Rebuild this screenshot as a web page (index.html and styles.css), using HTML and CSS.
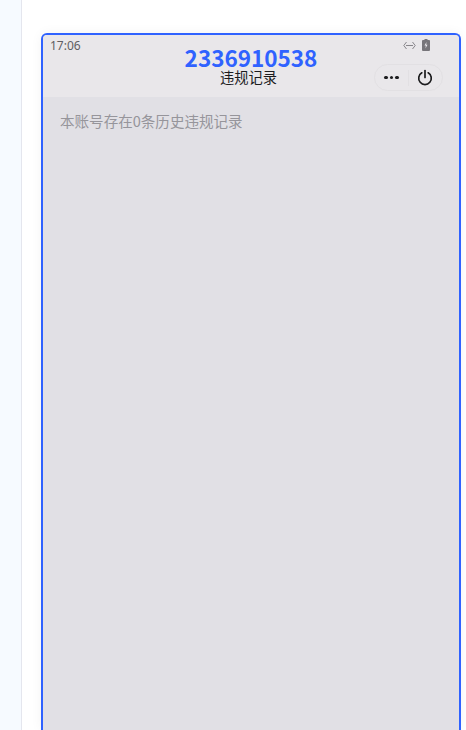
FILE: index.html
```html
<!DOCTYPE html>
<html lang="zh-CN">
<head>
    <meta charset="UTF-8">
    <meta name="viewport" content="width=device-width, initial-scale=1.0">
    <title>违规记录</title>
    <link rel="stylesheet" href="styles.css">
</head>
<body>

    <div class="sidebar"></div>

    <div class="main">
        <div class="phone">
            <div class="header">
                <div class="time">17:06</div>

                <div class="title-box">
                    <div class="account">2336910538</div>
                    <div class="title">违规记录</div>
                </div>

                <div class="header-right">
                    <div class="status-icons">
                        <svg class="icon-link" width="13" height="9" viewBox="0 0 13 9" fill="none" stroke="#88868b" stroke-width="1">
                            <path d="M3.5 1 L0.8 4.5 L3.5 8"/>
                            <path d="M9.5 1 L12.2 4.5 L9.5 8"/>
                            <path d="M3 4.5 H10"/>
                        </svg>
                        <svg class="icon-battery" width="8" height="12" viewBox="0 0 8 12">
                            <path fill="#77757a" d="M2.5 0 H5.5 V1 H7 Q8 1 8 2 V11 Q8 12 7 12 H1 Q0 12 0 11 V2 Q0 1 1 1 H2.5 Z"/>
                            <path fill="#e9e7ea" d="M4.5 3 L2.5 6.5 H3.8 L3.5 9.5 L5.5 5.8 H4.2 Z"/>
                        </svg>
                    </div>
                    <div class="capsule">
                        <div class="capsule-more">
                            <span class="dot"></span>
                            <span class="dot"></span>
                            <span class="dot"></span>
                        </div>
                        <div class="capsule-line"></div>
                        <svg class="icon-power" width="16" height="17" viewBox="0 0 16 17" fill="none" stroke="#1c1c1e" stroke-width="1.7" stroke-linecap="round">
                            <path d="M8 1.5 V8.5"/>
                            <path d="M4.8 3.8 A6.3 6.3 0 1 0 11.2 3.8"/>
                        </svg>
                    </div>
                </div>
            </div>

            <div class="content">本账号存在0条历史违规记录</div>
        </div>
    </div>

</body>
</html>
```

FILE: styles.css
```css
html, body {
    height: 100%;
}
body {
    margin: 0;
    display: flex;
    overflow: hidden;
    background-color: #fff;
    font-family: "Noto Sans CJK SC", "Noto Sans", sans-serif;
}
.sidebar {
    width: 21px;
    flex-shrink: 0;
    background-color: #f6faff;
    border-right: 1px solid #e4e6ee;
}
.main {
    flex: 1;
    box-sizing: border-box;
    height: 100%;
    padding: 33px 5px 0 19px;
    min-width: 0;
}
.phone {
    box-sizing: border-box;
    height: 100%;
    display: flex;
    flex-direction: column;
    border: 2px solid #2f62ff;
    border-bottom: none;
    border-radius: 6px 6px 0 0;
    background-color: #e1e0e5;
    box-shadow: 0 0 12px rgba(0,0,0,0.05);
    overflow: hidden;
}
.header {
    height: 62px;
    flex-shrink: 0;
    display: grid;
    grid-template-columns: 1fr auto 1fr;
    background-color: #e9e7ea;
}
.time {
    padding: 3px 0 0 7px;
    font-size: 12px;
    line-height: 16px;
    color: #5f5e62;
    font-family: "Noto Sans", sans-serif;
}
.title-box {
    padding-top: 10px;
    text-align: center;
}
.account {
    font-size: 22.5px;
    line-height: 24px;
    font-weight: 700;
    color: #2f62ff;
}
.title {
    padding-right: 5px;
    font-size: 14.25px;
    line-height: 16px;
    color: #1c1c1e;
}
.header-right {
    display: flex;
    flex-direction: column;
    align-items: flex-end;
    padding: 3px 16px 0 0;
}
.status-icons {
    display: flex;
    align-items: center;
    gap: 6px;
    height: 14px;
    margin-right: 13px;
}
.capsule {
    display: flex;
    align-items: center;
    width: 67px;
    height: 25px;
    margin-top: 12px;
    border: 1px solid #e2e0e3;
    border-radius: 14px;
}
.capsule-more {
    display: flex;
    justify-content: center;
    gap: 2px;
    width: 33px;
}
.dot {
    width: 3.6px;
    height: 3.6px;
    border-radius: 50%;
    background-color: #1c1c1e;
}
.capsule-line {
    width: 1px;
    height: 16px;
    background-color: #e2e0e3;
}
.icon-power {
    margin-left: 8px;
}
.content {
    padding: 14px 17px;
    font-size: 14.55px;
    line-height: 20px;
    color: #96959b;
}
```
